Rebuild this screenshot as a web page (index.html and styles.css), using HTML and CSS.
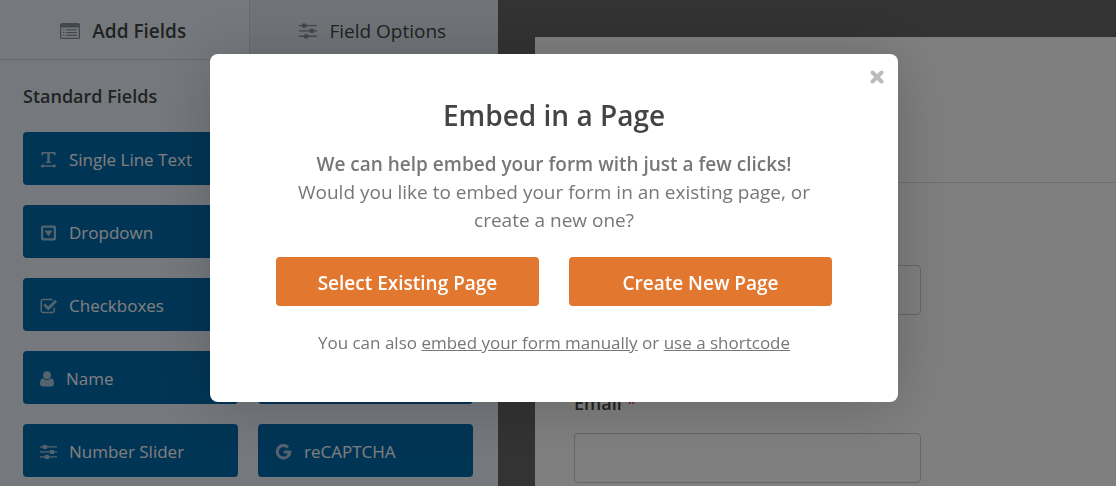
FILE: index.html
```html
<!DOCTYPE html>
<html lang="en">
<head>
    <meta charset="UTF-8">
    <meta name="viewport" content="width=device-width, initial-scale=1.0">
    <title>Form Builder</title>
    <link rel="stylesheet" href="styles.css">
</head>
<body>
    <!-- Shared icons -->
    <svg class="sprite" aria-hidden="true">
        <symbol id="sliders" viewBox="0 0 18 16">
            <path d="M0 2h18v1.300H0zM0 7.300h18v1.300H0zM0 12.600h18v1.300H0z" />
            <rect x="3" y="0.500" width="4.500" height="4.200" rx="1" />
            <rect x="10.500" y="5.800" width="4.500" height="4.200" rx="1" />
            <rect x="5" y="11.200" width="4.500" height="4.200" rx="1" />
        </symbol>
    </svg>

    <div class="builder">
        <!-- Sidebar -->
        <div class="sidebar">
            <div class="tabs">
                <button class="tab active" type="button">
                    <svg class="tab-icon wide" viewBox="0 0 20 16">
                        <path fill-rule="evenodd" d="M1.500 0h17A1.500 1.500 0 0 1 20 1.500v13a1.500 1.500 0 0 1-1.500 1.500h-17A1.500 1.500 0 0 1 0 14.500v-13A1.500 1.500 0 0 1 1.500 0zM1.300 4.500v10.200h17.400V4.500z" />
                        <path d="M3 6.200h1.500v1.200H3zM6 6.200h11v1.200H6zM3 9h1.500v1.200H3zM6 9h11v1.200H6zM3 11.800h1.500V13H3zM6 11.800h11V13H6z" />
                    </svg>
                    Add Fields
                </button>
                <button class="tab" type="button">
                    <svg class="tab-icon"><use href="#sliders" /></svg>
                    Field Options
                </button>
            </div>

            <div class="fields">
                <h2>Standard Fields</h2>
                <div class="field-grid">
                    <button class="field-button" type="button">
                        <svg class="field-icon" viewBox="0 0 16 16">
                            <path d="M1 0h14v3.600h-1.200L13 1.500H9.200v8.300l1.600.4v.9H5.200v-.9l1.600-.4V1.500H3L2.200 3.600H1z" />
                            <path d="M0 14l2.800-2.200v1.500h10.400v-1.500L16 14l-2.800 2.200v-1.500H2.800v1.500z" />
                        </svg>
                        Single Line Text
                    </button>
                    <button class="field-button" type="button" aria-label="Paragraph Text"></button>
                    <button class="field-button" type="button">
                        <svg class="field-icon" viewBox="0 0 16 16">
                            <path fill-rule="evenodd" d="M2.500.5h11a2 2 0 0 1 2 2v11a2 2 0 0 1-2 2h-11a2 2 0 0 1-2-2v-11a2 2 0 0 1 2-2zM2.700 2.700v10.600h10.600V2.700z" />
                            <path d="M4 5.500h8L8 11.500z" />
                        </svg>
                        Dropdown
                    </button>
                    <button class="field-button" type="button" aria-label="Multiple Choice"></button>
                    <button class="field-button" type="button">
                        <svg class="field-icon check" viewBox="0 0 17 16">
                            <path class="line" d="M12.500 1.500H3A1.800 1.800 0 0 0 1.200 3.300v9.400A1.800 1.800 0 0 0 3 14.500h9.400a1.800 1.800 0 0 0 1.800-1.800V9.500" />
                            <path d="M3.300 7.500l2-2 3 3L15 1.800l2 2-8.700 8.700z" />
                        </svg>
                        Checkboxes
                    </button>
                    <button class="field-button" type="button" aria-label="Numbers"></button>
                    <button class="field-button" type="button">
                        <svg class="field-icon narrow" viewBox="0 0 14 16">
                            <circle cx="7" cy="4.200" r="3.900" />
                            <path d="M3 7.300a5.500 5.500 0 0 0 8 0c2 .4 3 2.500 3 5.200 0 1.800-1 3-2.500 3h-9C1 15.500 0 14.300 0 12.500c0-2.700 1-4.800 3-5.200z" />
                        </svg>
                        Name
                    </button>
                    <button class="field-button" type="button" aria-label="Email"></button>
                    <button class="field-button" type="button">
                        <svg class="field-icon"><use href="#sliders" /></svg>
                        Number Slider
                    </button>
                    <button class="field-button" type="button">
                        <svg class="field-icon" viewBox="0 0 16 16">
                            <path class="google" d="M12.600 3.400A6.300 6.300 0 1 0 14.300 8H8.300" />
                        </svg>
                        reCAPTCHA
                    </button>
                </div>
            </div>
        </div>

        <!-- Form preview -->
        <div class="preview">
            <div class="form-panel">
                <div class="form-title"></div>
                <form class="form-body">
                    <div class="form-row">
                        <input type="text" aria-label="Name">
                    </div>
                    <div class="form-row">
                        <label for="email">Email <span class="required">*</span></label>
                        <input type="email" id="email">
                    </div>
                </form>
            </div>
        </div>
    </div>

    <!-- Embed modal -->
    <div class="overlay">
        <div class="modal" role="dialog" aria-modal="true" aria-labelledby="modal-title">
            <button class="close" type="button" aria-label="Close">
                <svg viewBox="0 0 14 14"><path d="M2.500 2.500l9 9M11.500 2.500l-9 9" /></svg>
            </button>
            <h1 id="modal-title">Embed in a Page</h1>
            <p class="message"><strong>We can help embed your form with just a few clicks!</strong><br>Would you like to embed your form in an existing page, or create a new one?</p>
            <div class="actions">
                <button class="action" type="button">Select Existing Page</button>
                <button class="action" type="button">Create New Page</button>
            </div>
            <p class="hint">You can also <a href="#manual">embed your form manually</a> or <a href="#shortcode">use a shortcode</a></p>
        </div>
    </div>
</body>
</html>
```
FILE: styles.css
```css
/* Global styles */
:root {
    --sidebar-color: #ebf3fc;
    --tab-color: #e0e8f0;
    --field-color: #036aab;
    --accent-color: #e27730;
    --dark-color: #444;
    --gray-color: #777;
}

* {
    box-sizing: border-box;
}

body {
    margin: 0;
    height: 100vh;
    overflow: hidden;
    font-family: 'Segoe UI', 'Open Sans', 'Noto Sans', sans-serif;
    color: var(--dark-color);
}

button {
    font-family: inherit;
    border: none;
    cursor: pointer;
}

.sprite {
    display: none;
}

.builder {
    display: flex;
    height: 100%;
}

/* Sidebar */
.sidebar {
    width: 498px;
    flex-shrink: 0;
    background-color: var(--sidebar-color);
}

.tabs {
    display: flex;
    height: 60px;
}

.tab {
    flex: 1;
    display: flex;
    align-items: center;
    justify-content: center;
    gap: 12px;
    padding: 2px 2px 0 0;
    font-size: 19px;
    color: var(--dark-color);
    background-color: var(--tab-color);
    border-left: 1px solid #ced7e0;
    border-bottom: 1px solid #ced7e0;
}

.tab.active {
    font-weight: 600;
    background-color: var(--sidebar-color);
    border-left: none;
}

.tab-icon {
    width: 18px;
    height: 16px;
    fill: #86919e;
}

.tab-icon.wide {
    width: 20px;
}

.fields {
    padding: 24px 25px 20px 23px;
}

.fields h2 {
    margin: 0 0 24px;
    font-size: 18px;
    line-height: 24px;
    font-weight: 600;
}

.field-grid {
    display: grid;
    grid-template-columns: 1fr 1fr;
    gap: 20px;
}

.field-button {
    display: flex;
    align-items: center;
    gap: 12px;
    height: 53px;
    padding: 2px 17px 0;
    font-size: 17px;
    color: #fff;
    background-color: var(--field-color);
    border-radius: 4px;
}

.field-icon {
    width: 17px;
    height: 16px;
    flex-shrink: 0;
    fill: #a9c9de;
    overflow: visible;
}

.field-icon.narrow {
    width: 14px;
}

.field-icon .line,
.field-icon .google {
    fill: none;
    stroke: #a9c9de;
    stroke-width: 1.5;
}

.field-icon .google {
    stroke-width: 3;
}

/* Form preview */
.preview {
    flex: 1;
    padding: 37px 0 0 37px;
    background-color: #666;
}

.form-panel {
    height: 100%;
    padding: 0 0 0 39px;
    background-color: #fff;
}

.form-title {
    height: 146px;
    border-bottom: 1px solid #ddd;
}

.form-body {
    padding-top: 82px;
}

.form-row {
    display: flex;
    flex-direction: column;
    gap: 18px;
    margin-bottom: 76px;
    max-width: 347px;
}

.form-row label {
    font-size: 18px;
    line-height: 24px;
    font-weight: 600;
}

.required {
    color: #d63638;
    font-weight: 400;
}

.form-row input {
    height: 50px;
    border: 1px solid #ccc;
    border-radius: 4px;
    background-color: #fff;
}

/* Modal */
.overlay {
    position: fixed;
    inset: 0;
    display: flex;
    justify-content: center;
    align-items: flex-start;
    padding: 54px 8px 0 0;
    background-color: rgba(0, 0, 0, 0.5);
}

.modal {
    position: relative;
    width: 688px;
    max-width: 100%;
    padding: 41px 66px 46px;
    text-align: center;
    background-color: #fff;
    border-radius: 8px;
    box-shadow: 0 4px 60px rgba(0, 0, 0, 0.2);
}

.close {
    position: absolute;
    top: 16px;
    right: 14px;
    width: 14px;
    height: 14px;
    padding: 0;
    background: none;
}

.close svg {
    display: block;
    fill: none;
    stroke: #bbb;
    stroke-width: 4;
    stroke-linecap: round;
}

.modal h1 {
    margin: 0 0 15px;
    font-size: 28px;
    line-height: 40px;
    font-weight: 600;
}

.message {
    margin: 0 0 23px;
    font-size: 19px;
    line-height: 28px;
    color: var(--gray-color);
}

.message strong {
    font-weight: 600;
}

.actions {
    display: flex;
    gap: 30px;
}

.action {
    flex: 1;
    height: 49px;
    padding: 2px 0 0;
    font-size: 19px;
    font-weight: 600;
    color: #fff;
    background-color: var(--accent-color);
    border-radius: 4px;
}

.hint {
    margin: 24px 0 0;
    font-size: 17px;
    line-height: 26px;
    color: var(--gray-color);
}

.hint a {
    color: inherit;
}
```
